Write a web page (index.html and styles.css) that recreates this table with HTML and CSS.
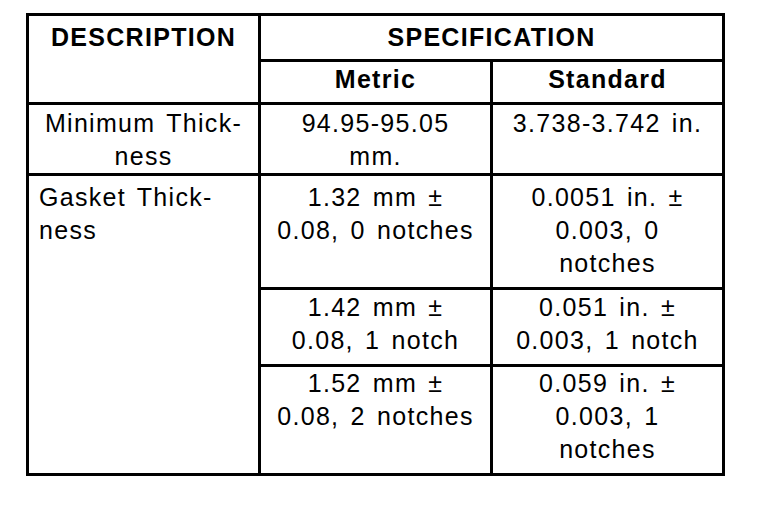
FILE: index.html
```html
<!DOCTYPE html>
<html>
<head>
  <meta charset="UTF-8">
  <title>Specification</title>
  <link rel="stylesheet" href="styles.css">
</head>
<body>

  <div class="page">
    <table class="spec">
      <colgroup>
        <col class="c">
        <col class="c">
        <col class="c">
      </colgroup>
      <tr class="r-head">
        <th rowspan="2" class="top">DESCRIPTION</th>
        <th colspan="2">SPECIFICATION</th>
      </tr>
      <tr class="r-sub">
        <th>Metric</th>
        <th>Standard</th>
      </tr>
      <tr class="r-min">
        <td>Minimum Thick-<br>ness</td>
        <td>94.95-95.05<br>mm.</td>
        <td>3.738-3.742 in.</td>
      </tr>
      <tr class="r-g0">
        <td rowspan="3" class="left">Gasket Thick-<br>ness</td>
        <td>1.32 mm ±<br>0.08, 0 notches</td>
        <td>0.0051 in. ±<br>0.003, 0<br>notches</td>
      </tr>
      <tr class="r-g1">
        <td>1.42 mm ±<br>0.08, 1 notch</td>
        <td>0.051 in. ±<br>0.003, 1 notch</td>
      </tr>
      <tr class="r-g2">
        <td>1.52 mm ±<br>0.08, 2 notches</td>
        <td>0.059 in. ±<br>0.003, 1<br>notches</td>
      </tr>
    </table>
  </div>

</body>
</html>
```

FILE: styles.css
```css
body {
  margin: 0;
  padding: 0;
  background: #fff;
  font-family: 'Liberation Sans', Arial, sans-serif;
  color: #000;
}
.page {
  padding: 13px 0 0 26px;
}
.spec {
  border-collapse: collapse;
  table-layout: fixed;
  width: 699px;
  border: 3px solid #000;
  font-size: 25px;
  letter-spacing: 1.3px;
  word-spacing: 3px;
  line-height: 33px;
}
.spec col.c {
  width: 232px;
}
.spec th,
.spec td {
  border: 3px solid #000;
  padding: 2px 6px 0 6px;
  text-align: center;
  vertical-align: top;
}
.spec th {
  font-weight: bold;
}
.spec td.left {
  text-align: left;
  padding-left: 10px;
}
.r-head { height: 46px; }
.r-sub { height: 43px; }
.r-min { height: 71px; }
.r-g0 { height: 114px; }
.r-g1 { height: 77px; }
.r-g2 { height: 109px; }
.r-head th { padding-top: 5px; }
.r-sub th { padding-top: 1px; }
.r-g0 td { padding-top: 5px; }
.r-g1 td { padding-top: 1px; }
.r-g2 td { padding-top: 0; }
```
